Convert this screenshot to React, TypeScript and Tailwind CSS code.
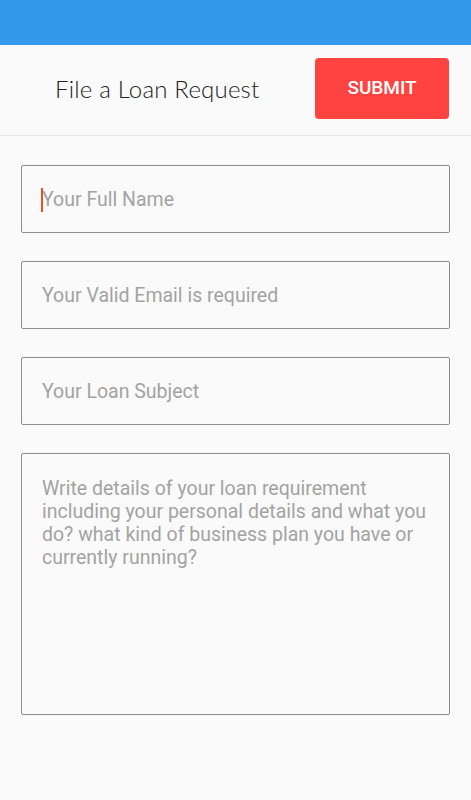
import React from "react";

const fieldClass =
  "w-full h-[68px] border border-[#8e8e8e] rounded-[2px] bg-transparent px-[20px] text-[19.5px] text-[#333] placeholder:text-[#a3a3a3] outline-none";

export default function App() {
  return (
    <div className="min-h-[800px] bg-[#fafafa] font-['Roboto',sans-serif]">
      <div className="h-[45px] bg-[#3498eb]" />

      <div className="h-[91px] flex items-center justify-between border-b border-[#e6e6e6] pl-[55px] pr-[22px]">
        <h1 className="font-['Lato',sans-serif] font-light text-[24px] text-[#222] tracking-[0.2px] -mt-[2px]">
          File a Loan Request
        </h1>
        <button className="w-[134px] h-[61px] -mt-[4px] rounded-[4px] bg-[#ff4340] text-white font-medium text-[19px]">
          SUBMIT
        </button>
      </div>

      <form className="flex flex-col gap-[28px] pt-[29px] px-[21px]">
        <div className="relative">
          <input className={fieldClass} placeholder="Your Full Name" />
          <span className="absolute left-[20px] top-[23px] w-[2px] h-[24px] bg-[#e8531d]" />
        </div>
        <input className={fieldClass} placeholder="Your Valid Email is required" />
        <input className={fieldClass} placeholder="Your Loan Subject" />
        <textarea
          className="w-full h-[262px] border border-[#8e8e8e] rounded-[2px] bg-transparent px-[20px] pt-[23px] text-[19.5px] leading-[23px] text-[#333] placeholder:text-[#a3a3a3] outline-none resize-none"
          placeholder="Write details of your loan requirement including your personal details and what you do? what kind of business plan you have or currently running?"
        />
      </form>
    </div>
  );
}
